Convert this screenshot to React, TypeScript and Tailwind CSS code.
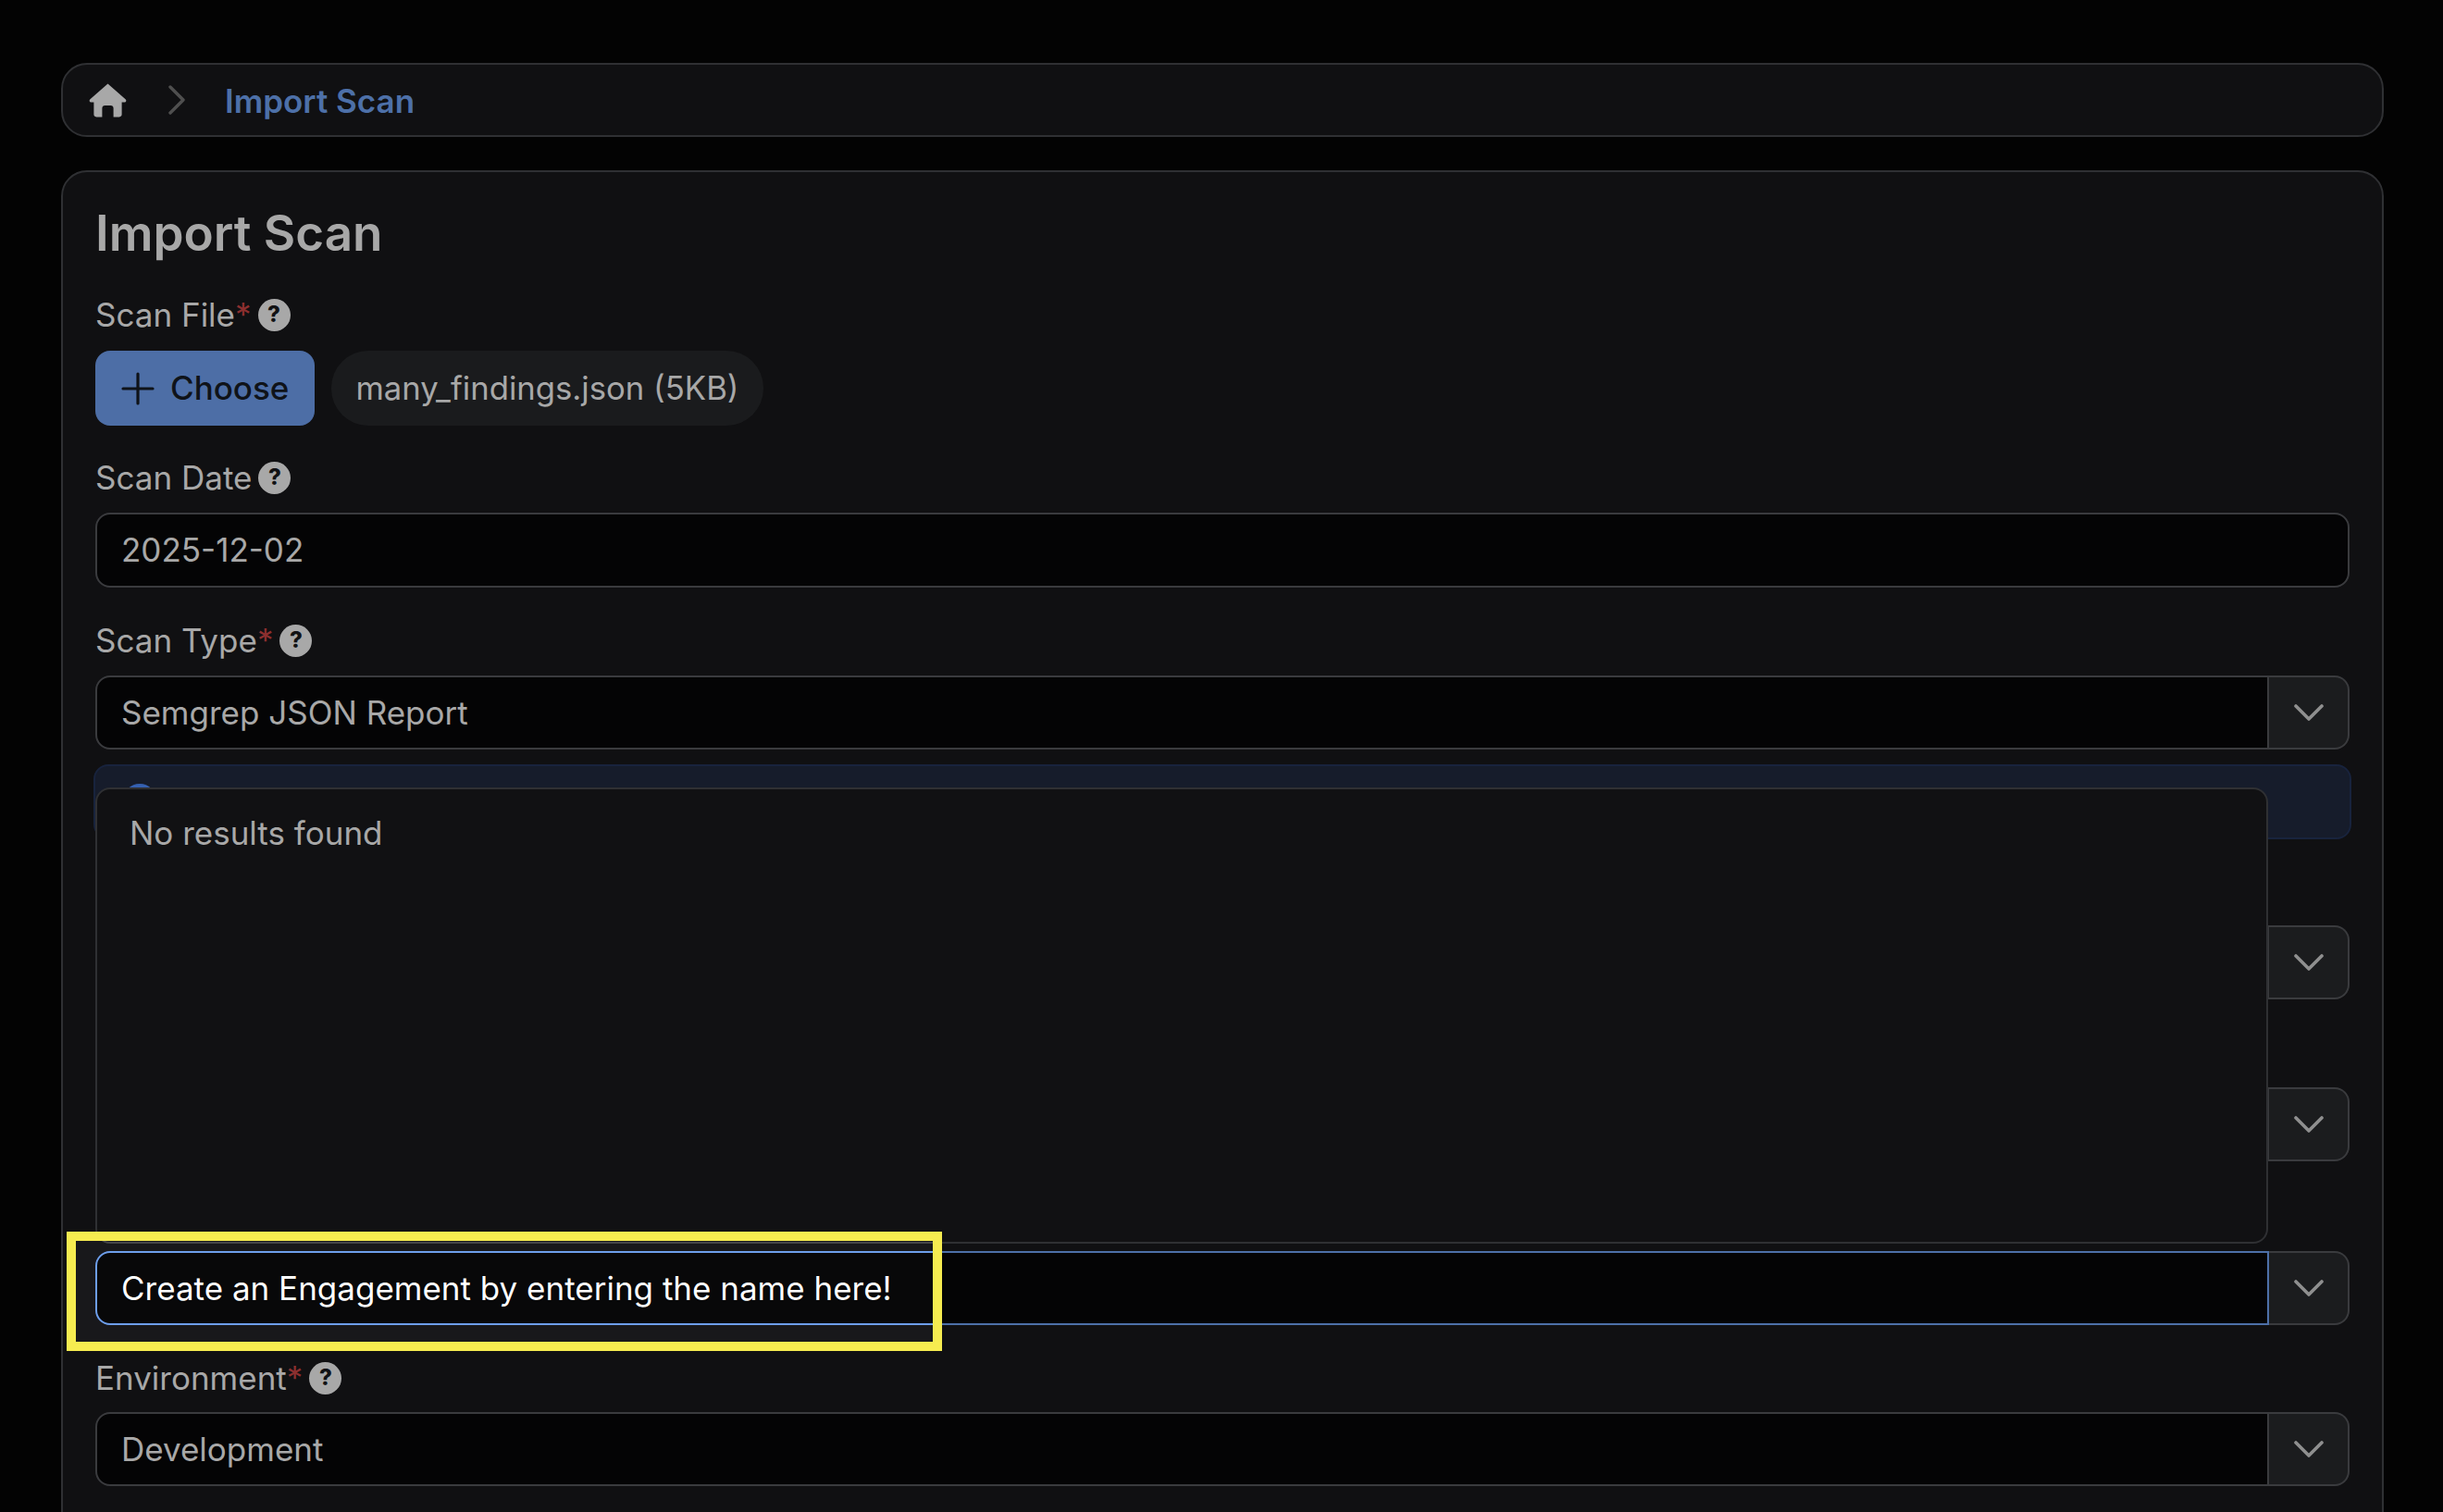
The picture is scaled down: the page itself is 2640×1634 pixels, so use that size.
import React from "react";

function Chevron() {
  return (
    <svg width="32" height="18" viewBox="0 0 32 18" fill="none" stroke="#8f8f8f" strokeWidth="3.6" strokeLinecap="round" strokeLinejoin="round">
      <path d="M2 2 L16 16 L30 2" />
    </svg>
  );
}

function Help() {
  return (
    <span className="flex h-[35px] w-[35px] shrink-0 items-center justify-center rounded-full bg-[#a8a8a8] text-[24px] font-extrabold leading-none text-[#111214]">
      ?
    </span>
  );
}

function Label({ text, required, className }: { text: string; required?: boolean; className?: string }) {
  return (
    <div className={"flex h-[40px] items-center text-[35px] leading-[40px] text-[#a8a8a8] " + (className ?? "")}>
      <span>{text}</span>
      {required && <span className="text-[#8c2f2f]">*</span>}
      <span className="ml-[7px]"><Help /></span>
    </div>
  );
}

function Select({ value, className, active }: { value?: string; className?: string; active?: boolean }) {
  return (
    <div className={"flex h-[80px] w-full " + (className ?? "")}>
      <div
        className={
          "flex min-w-0 flex-1 items-center rounded-l-[16px] border-2 bg-[#040405] pl-[26px] text-[35px] " +
          (active ? "border-[#4d70a8] text-[#b6b6b6]" : "border-[#3a3b3e] text-[#a8a8a8]")
        }
      >
        {value}
      </div>
      <div className="flex w-[87px] shrink-0 items-center justify-center rounded-r-[16px] border-2 border-l-0 border-[#3a3b3e] bg-[#1b1c1e]">
        <Chevron />
      </div>
    </div>
  );
}

export default function App() {
  return (
    <div className="relative h-[1634px] w-full overflow-hidden bg-[#030303] pl-[66px] pr-[64px] pt-[68px] font-['Inter',sans-serif]">
      <nav className="flex h-[80px] items-center rounded-[28px] border-2 border-[#2f3033] bg-[#101012] pl-[28px]">
        <svg width="41" height="37" viewBox="0 0 41 37" fill="#a8a8a8">
          <path d="M20.5 0.6 L39.6 17.2 C41 18.6 40.4 20.4 38.6 20.4 L35.6 20.4 L35.6 33.6 C35.6 35.4 34.6 36.4 32.8 36.4 L26.6 36.4 L26.6 27 C26.6 25 25.4 24 23.6 24 L17.4 24 C15.6 24 14.4 25 14.4 27 L14.4 36.4 L8.2 36.4 C6.4 36.4 5.4 35.4 5.4 33.6 L5.4 20.4 L2.4 20.4 C0.6 20.4 0 18.6 1.4 17.2 Z" />
        </svg>
        <svg className="ml-[45px]" width="18" height="32" viewBox="0 0 18 32" fill="none" stroke="#4f4f4f" strokeWidth="3.4" strokeLinecap="round" strokeLinejoin="round">
          <path d="M2 2 L16 16 L2 30" />
        </svg>
        <span className="ml-[43px] mt-[2px] text-[35px] font-semibold text-[#4d70a8]">Import Scan</span>
      </nav>

      <main className="relative mt-[36px] h-[1500px] rounded-[28px] border-2 border-[#2f3033] bg-[#101012] px-[35px] pt-[36px]">
        <h1 className="h-[60px] text-[53px] font-semibold leading-[60px] text-[#a8a8a8]">Import Scan</h1>

        <Label text="Scan File" required className="mt-[38px]" />
        <div className="mt-[19px] flex h-[81px] gap-[18px]">
          <button className="flex w-[237px] items-center gap-[17px] rounded-[16px] bg-[#4d6ea6] pl-[28px] text-[35px] font-medium text-[#0f1319]">
            <svg width="36" height="36" viewBox="0 0 36 36" fill="none" stroke="#0f1319" strokeWidth="3.2" strokeLinecap="round">
              <path d="M18 2 V34 M2 18 H34" />
            </svg>
            Choose
          </button>
          <div className="flex w-[467px] items-center justify-center rounded-[40px] bg-[#1a1b1d] text-[34.7px] text-[#a8a8a8]">
            many_findings.json (5KB)
          </div>
        </div>

        <Label text="Scan Date" className="mt-[36px]" />
        <div className="mt-[18px] flex h-[81px] items-center rounded-[16px] border-2 border-[#3a3b3e] bg-[#040405] pl-[26px] text-[35px] text-[#a8a8a8]">
          2025-12-02
        </div>

        <Label text="Scan Type" required className="mt-[37px]" />
        <Select value="Semgrep JSON Report" className="mt-[18px]" />

        <div className="-mx-[2px] mt-[16px] h-[81px] rounded-[16px] border-2 border-[#18233d] bg-[#161c2b] pl-[30px] pt-[19px]">
          <div className="h-[36px] w-[36px] rounded-full bg-[#3560b0]" />
        </div>

        <Select className="mt-[93px]" />
        <Select className="mt-[95px]" />
        <Select value="Create an Engagement by entering the name here!" active className="mt-[97px]" />

        <Label text="Environment" required className="mt-[37px]" />
        <Select value="Development" className="mt-[17px]" />

        <div className="absolute left-[35px] top-[665px] h-[493px] w-[2348px] rounded-[16px] border-2 border-[#2f3033] bg-[#111113] pl-[35px] pt-[21px] text-[35px] text-[#a8a8a8]">
          No results found
        </div>
      </main>

      <div className="absolute left-[72px] top-[1331px] h-[129px] w-[946px] border-[10px] border-[#f6ec50] bg-white/[0.01] backdrop-brightness-[1.4]" />
    </div>
  );
}
